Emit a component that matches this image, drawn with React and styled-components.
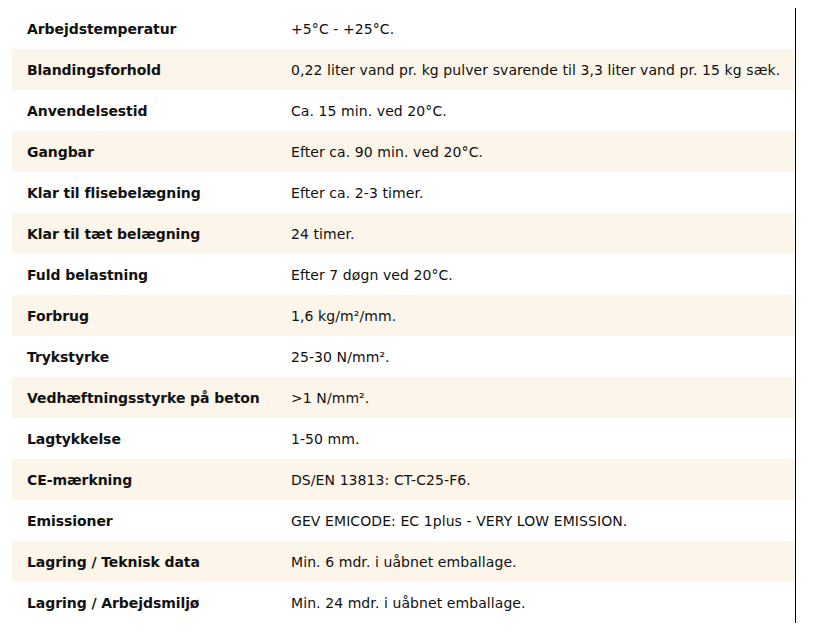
import React from "react";
import styled, { createGlobalStyle } from "styled-components";

const Global = createGlobalStyle`
  body {
    margin: 8px;
    background: #ffffff;
    font-family: "DejaVu Sans", Verdana, sans-serif;
    color: #111111;
  }
`;

const Frame = styled.div`
  width: 788px;
  box-sizing: border-box;
  border-right: 1px solid #000000;
  padding: 0 3px 0 4px;
`;

const Table = styled.div`
  display: grid;
  grid-template-columns: 264px 1fr;
`;

const Row = styled.div`
  display: contents;
`;

const Cell = styled.div`
  height: 41px;
  display: flex;
  align-items: center;
  padding: 0 15px;
  background: ${(p) => (p.$shaded ? "#fcf5ea" : "#ffffff")};
  font-size: 14px;
  font-weight: ${(p) => (p.$label ? 700 : 400)};
  letter-spacing: ${(p) => (p.$label ? "-0.07px" : "0.08px")};
  white-space: nowrap;
  color: #111111;
`;

const rows = [
  ["Arbejdstemperatur", "+5°C - +25°C."],
  ["Blandingsforhold", "0,22 liter vand pr. kg pulver svarende til 3,3 liter vand pr. 15 kg sæk."],
  ["Anvendelsestid", "Ca. 15 min. ved 20°C."],
  ["Gangbar", "Efter ca. 90 min. ved 20°C."],
  ["Klar til flisebelægning", "Efter ca. 2-3 timer."],
  ["Klar til tæt belægning", "24 timer."],
  ["Fuld belastning", "Efter 7 døgn ved 20°C."],
  ["Forbrug", "1,6 kg/m²/mm."],
  ["Trykstyrke", "25-30 N/mm²."],
  ["Vedhæftningsstyrke på beton", ">1 N/mm²."],
  ["Lagtykkelse", "1-50 mm."],
  ["CE-mærkning", "DS/EN 13813: CT-C25-F6."],
  ["Emissioner", "GEV EMICODE: EC 1plus - VERY LOW EMISSION."],
  ["Lagring / Teknisk data", "Min. 6 mdr. i uåbnet emballage."],
  ["Lagring / Arbejdsmiljø", "Min. 24 mdr. i uåbnet emballage."],
];

export default function App() {
  return (
    <>
      <Global />
      <Frame>
        <Table>
          {rows.map(([k, v], i) => (
            <Row key={k}>
              <Cell $label $shaded={i % 2 === 1}>{k}</Cell>
              <Cell $shaded={i % 2 === 1}>{v}</Cell>
            </Row>
          ))}
        </Table>
      </Frame>
    </>
  );
}
